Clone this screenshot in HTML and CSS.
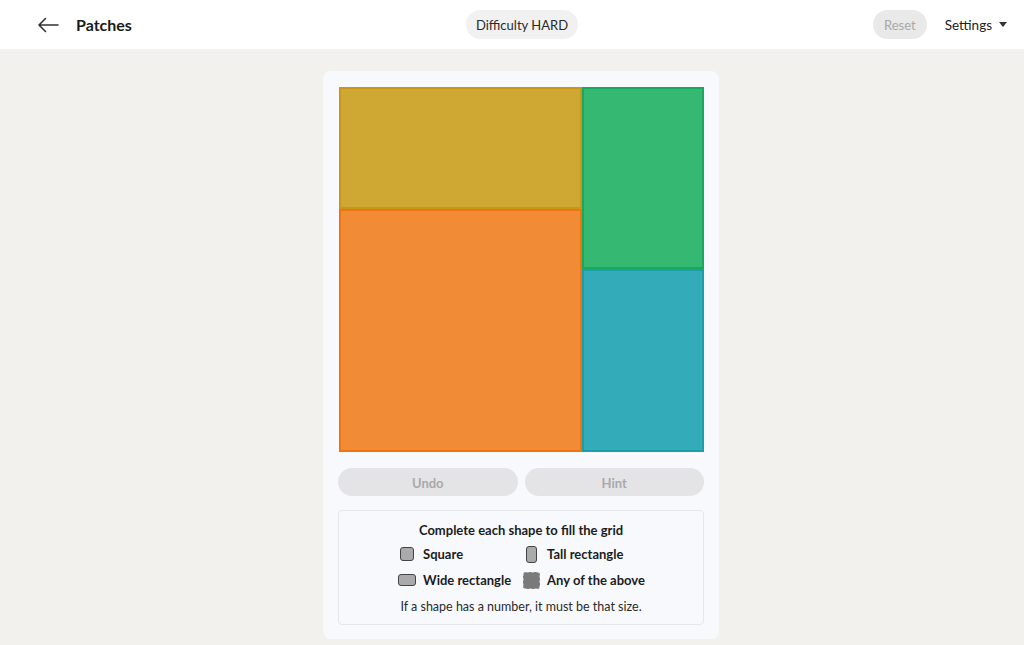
FILE: index.html
```html
<!DOCTYPE html>
<html lang="en">
<head>
<meta charset="utf-8">
<title>Patches</title>
<link rel="stylesheet" href="styles.css">
</head>
<body>
<header class="topbar">
  <div class="left">
    <svg class="back" width="22" height="16" viewBox="0 0 22 16" aria-hidden="true">
      <path d="M21 8H2M8.5 1.5L2 8l6.5 6.5" fill="none" stroke="#333" stroke-width="1.6" stroke-linecap="round" stroke-linejoin="round"/>
    </svg>
    <span class="title">Patches</span>
  </div>
  <div class="center">
    <span class="pill">Difficulty HARD</span>
  </div>
  <div class="right">
    <span class="pill reset">Reset</span>
    <span class="settings">Settings <span class="caret"></span></span>
  </div>
</header>
<main class="main">
  <section class="card">
    <div class="board">
      <div class="piece gold"></div>
      <div class="piece green"></div>
      <div class="piece orange"></div>
      <div class="piece teal"></div>
    </div>
    <div class="actions">
      <button class="btn">Undo</button>
      <button class="btn">Hint</button>
    </div>
    <div class="legend">
      <div class="legend-title">Complete each shape to fill the grid</div>
      <div class="legend-grid">
        <div class="item"><span class="ic"><span class="shape sq"></span></span><span>Square</span></div>
        <div class="item"><span class="ic"><span class="shape tall"></span></span><span>Tall rectangle</span></div>
        <div class="item"><span class="ic"><span class="shape wide"></span></span><span>Wide rectangle</span></div>
        <div class="item"><span class="ic"><span class="shape any"></span></span><span>Any of the above</span></div>
      </div>
      <div class="legend-note">If a shape has a number, it must be that size.</div>
    </div>
  </section>
</main>
</body>
</html>
```
FILE: styles.css
```css
* { box-sizing: border-box; }
html, body { margin: 0; padding: 0; }
body {
  font-family: Lato, "Noto Sans", "Liberation Sans", sans-serif;
  background: #f2f1ed;
  color: #1c1c1c;
  height: 645px;
  overflow: hidden;
}
.topbar {
  height: 49px;
  background: #ffffff;
  display: grid;
  grid-template-columns: 1fr auto 1fr;
  align-items: center;
  padding: 0 17px 0 37px;
}
.left { display: flex; align-items: center; }
.back { display: block; margin-right: 17px; }
.title { font-size: 16px; font-weight: 700; color: #1a1a1a; }
.center { display: flex; justify-content: center; }
.pill {
  display: inline-flex;
  align-items: center;
  height: 29px;
  padding: 0 10px;
  border-radius: 15px;
  background: #f1f1f1;
  font-size: 13px;
  color: #2a2a2a;
}
.right { display: flex; justify-content: flex-end; align-items: center; }
.reset { background: #e9e9e9; color: #a8a8a8; padding: 0 11px; }
.settings {
  margin-left: 18px;
  font-size: 13.5px;
  color: #222;
  display: inline-flex;
  align-items: center;
}
.caret {
  display: inline-block;
  width: 0; height: 0;
  margin-left: 7px;
  border-left: 4px solid transparent;
  border-right: 4px solid transparent;
  border-top: 5px solid #333;
}
.main {
  display: flex;
  justify-content: center;
  padding: 22px 0 0 18px;
}
.card {
  width: 396px;
  background: #f8f9fc;
  border-radius: 8px;
  padding: 16px 15px 14px 15px;
}
.board {
  width: 365px;
  height: 365px;
  margin-left: 1px;
  display: grid;
  grid-template-columns: repeat(6, 1fr);
  grid-template-rows: repeat(6, 1fr);
}
.piece { border: 2px solid; }
.gold { grid-column: 1 / 5; grid-row: 1 / 3; background: #cfa733; border-color: #c7961a; }
.green { grid-column: 5 / 7; grid-row: 1 / 4; background: #34b872; border-color: #1aa85a; }
.orange { grid-column: 1 / 5; grid-row: 3 / 7; background: #f28b35; border-color: #ef7410; }
.teal { grid-column: 5 / 7; grid-row: 4 / 7; background: #33abb9; border-color: #1a9fa9; }
.actions {
  display: flex;
  gap: 7px;
  margin-top: 16px;
}
.btn {
  flex: 1;
  height: 28px;
  border: none;
  border-radius: 14px;
  background: #e4e4e6;
  color: #a9a9ab;
  font-family: inherit;
  font-size: 13px;
  font-weight: 700;
  padding-top: 2px;
}
.legend {
  margin-top: 14px;
  border: 1px solid #e5e7eb;
  border-radius: 4px;
  padding: 10px 0 8px;
  display: flex;
  flex-direction: column;
  align-items: center;
}
.legend-title { font-size: 13px; font-weight: 700; line-height: 18px; }
.legend-grid {
  display: grid;
  grid-template-columns: auto auto;
  column-gap: 10px;
  row-gap: 8px;
  margin-top: 6px;
}
.item {
  display: flex;
  align-items: center;
  font-size: 13px;
  font-weight: 700;
  line-height: 18px;
}
.ic {
  width: 20px;
  display: flex;
  justify-content: center;
  margin-right: 6px;
}
.shape {
  display: block;
  background: #aaaaaa;
  border: 1px solid #444;
  border-radius: 3px;
}
.sq { width: 14px; height: 14px; }
.tall { width: 11px; height: 17px; }
.wide { width: 18px; height: 12px; }
.any { width: 17px; height: 17px; background: #7a7a7a; border: 1px dashed #aaa; }
.legend-note { font-size: 12.5px; line-height: 18px; margin-top: 9px; color: #2a2a2a; }
```
